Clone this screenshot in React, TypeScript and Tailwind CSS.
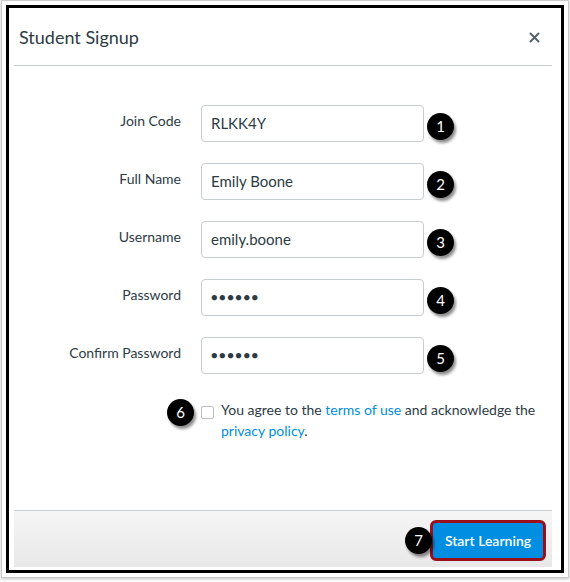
import React from "react";

function Badge({ n, className = "" }: { n: number; className?: string }) {
  return (
    <div
      className={`flex h-[27px] w-[27px] shrink-0 items-center justify-center rounded-full bg-black text-[15px] text-white shadow-[2px_3px_3px_rgba(0,0,0,0.45)] ${className}`}
      style={{ fontFamily: "Lato, 'Open Sans', sans-serif" }}
    >
      {n}
    </div>
  );
}

function Row({ label, value, n, pw }: { label: string; value: string; n: number; pw?: boolean }) {
  return (
    <div className="flex items-start">
      <div className="w-[167px] pt-[5px] text-right text-[14px] text-[#2d3b45]">{label}</div>
      <div className="ml-[20px] flex h-[37px] w-[223px] items-center rounded-[4px] border border-[#c7cdd1] bg-white px-[9px] text-[15px] text-[#2d3b45]">
        {pw ? <span className="tracking-[1.5px] text-[11px]">●●●●●●</span> : value}
      </div>
      <Badge n={n} className="ml-[3px] mt-[8px]" />
    </div>
  );
}

export default function App() {
  return (
    <div className="h-[582px] w-[570px] bg-white" style={{ fontFamily: "Lato, 'Open Sans', sans-serif" }}>
      <div className="ml-[1px] h-[578px] w-[568px] border border-[#c9c9c9] bg-white px-[4px] pt-[4px] shadow-[0_1px_3px_rgba(0,0,0,0.25)]">
        <div className="flex h-[568px] w-[558px] flex-col border-[3px] border-black bg-white pb-[3px] pl-[5px] pr-[9px]">
          <div className="flex h-[58px] items-center justify-between border-b border-[#c7cdd1] pl-[5px] pr-[12px] pt-[1px]">
            <div className="text-[18px] text-[#2d3b45]">Student Signup</div>
            <svg width="11" height="11" viewBox="0 0 11 11" className="mt-[1px]">
              <path d="M1.5 1.5 L9.5 9.5 M9.5 1.5 L1.5 9.5" stroke="#56636b" strokeWidth="2" strokeLinecap="round" />
            </svg>
          </div>
          <div className="flex flex-1 flex-col pt-[39px]">
            <div className="flex flex-col gap-[21px]">
              <Row label="Join Code" value="RLKK4Y" n={1} />
              <Row label="Full Name" value="Emily Boone" n={2} />
              <Row label="Username" value="emily.boone" n={3} />
              <Row label="Password" value="" n={4} pw />
              <Row label="Confirm Password" value="" n={5} pw />
            </div>
            <div className="mt-[25px] flex items-start">
              <div className="flex w-[187px] justify-end pr-[7px]">
                <Badge n={6} />
              </div>
              <div className="mt-[7px] h-[13px] w-[13px] shrink-0 rounded-[2px] border border-[#b9bfc4] bg-white" />
              <div className="ml-[7px] w-[320px] text-[14px] leading-[21px] text-[#2d3b45]">
                You agree to the <span className="text-[#008ee2]">terms of use</span> and acknowledge the{" "}
                <span className="text-[#008ee2]">privacy policy</span>.
              </div>
            </div>
          </div>
          <div className="flex h-[57px] items-center justify-end border-t border-[#c7cdd1] bg-gradient-to-b from-[#f5f5f5] to-[#e8e8e8] pr-[6px] pt-[2px]">
            <Badge n={7} className="mr-[-2px] z-10" />
            <div className="flex h-[41px] w-[116px] items-center justify-center rounded-[6px] border-[3px] border-[#9b0f1c] bg-[#008ee2] text-[14px] font-semibold text-white">
              Start Learning
            </div>
          </div>
        </div>
      </div>
    </div>
  );
}
